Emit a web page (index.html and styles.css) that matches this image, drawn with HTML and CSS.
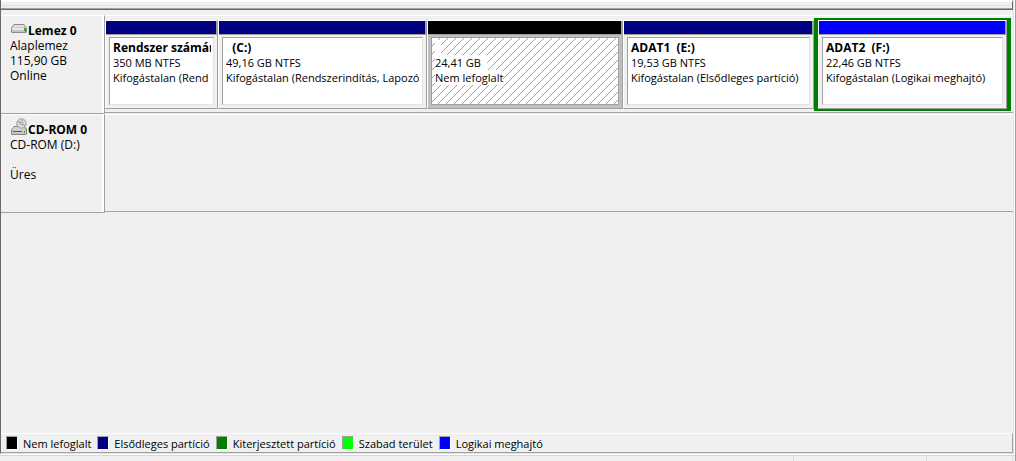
FILE: index.html
```html
<!DOCTYPE html>
<html lang="hu">
<head>
<meta charset="utf-8">
<title>Lemezkezelés</title>
<link rel="stylesheet" href="styles.css">
</head>
<body>
<div class="window">
  <div class="client">
    <div class="upper-pane"></div>
    <main class="disks">
      <section class="disk">
        <header class="disk-label">
          <h2 class="disk-name">
            <svg class="icon" viewBox="0 0 18 18" aria-hidden="true">
              <path d="M4 6h10l3 4v4l-1 1h-14l-1-1v-4z" fill="#8c8c8c"/>
              <path d="M4 7h10l2 3h-14z" fill="#cfcfcf"/>
              <path d="M5 7h8l1 2h-10z" fill="#e2e2e2"/>
              <path d="M2 10h14v4h-14z" fill="#c4c4c4"/>
              <path d="M2 10h12v2h-12z" fill="#e9e9e9"/>
              <path d="M14 10h1v3h-1z" fill="#2fae2f"/>
              <path d="M15 10h1v4h-1z" fill="#777"/>
            </svg><span>Lemez 0</span>
          </h2>
          <p>Alaplemez</p>
          <p>115,90 GB</p>
          <p>Online</p>
        </header>
        <div class="disk-map parts">
          <article class="part">
            <div class="bar primary"></div>
            <div class="body"><div class="info"><div class="lines">
              <h3>Rendszer számára</h3>
              <p>350 MB NTFS</p>
              <p>Kifogástalan (Rend</p>
            </div></div></div>
          </article>
          <article class="part">
            <div class="bar primary"></div>
            <div class="body"><div class="info"><div class="lines">
              <h3>&nbsp; (C:)</h3>
              <p>49,16 GB NTFS</p>
              <p>Kifogástalan (Rendszerindítás, Lapozó</p>
            </div></div></div>
          </article>
          <article class="part selected">
            <div class="bar unallocated"></div>
            <div class="body"><div class="info">
              <svg class="hatch" aria-hidden="true">
                <defs><pattern id="hatch" width="8" height="8" patternUnits="userSpaceOnUse">
                  <path d="M0 7h1v1h-1zM1 6h1v1h-1zM2 5h1v1h-1zM3 4h1v1h-1zM4 3h1v1h-1zM5 2h1v1h-1zM6 1h1v1h-1zM7 0h1v1h-1z" fill="#a0a0a0"/>
                </pattern></defs>
                <rect width="100%" height="100%" fill="url(#hatch)"/>
              </svg>
              <div class="lines">
                <h3><span>&nbsp;&nbsp;</span></h3>
                <p><span>24,41 GB&nbsp;&nbsp;</span></p>
                <p><span>Nem lefoglalt</span></p>
              </div>
            </div></div>
          </article>
          <article class="part">
            <div class="bar primary"></div>
            <div class="body"><div class="info"><div class="lines">
              <h3>ADAT1&nbsp; (E:)</h3>
              <p>19,53 GB NTFS</p>
              <p>Kifogástalan (Elsődleges partíció)</p>
            </div></div></div>
          </article>
          <div class="extended">
            <article class="part">
              <div class="bar logical"></div>
              <div class="body"><div class="info"><div class="lines">
                <h3>ADAT2&nbsp; (F:)</h3>
                <p>22,46 GB NTFS</p>
                <p>Kifogástalan (Logikai meghajtó)</p>
              </div></div></div>
            </article>
          </div>
        </div>
      </section>
      <section class="disk">
        <header class="disk-label">
          <h2 class="disk-name">
            <svg class="icon" viewBox="0 0 18 18" aria-hidden="true">
              <path d="M4 9h10l3 3v5l-1 1h-14l-1-1v-4z" fill="#858585"/>
              <path d="M4 10h10l2 3h-14z" fill="#d4d4d4"/>
              <path d="M2 13h14v4h-14z" fill="#c8c8c8"/>
              <path d="M3 14h9v1h-9z" fill="#5c5c5c"/>
              <path d="M14 14h1v2h-1z" fill="#2fae2f"/>
              <circle cx="11.500" cy="6.500" r="4.700" fill="#dcdcdc" stroke="#9a9a9a"/>
              <path d="M11.500 6.500l-4 -1 1-2z" fill="#6fd06f"/>
              <path d="M11.500 6.500l0-4 2 1z" fill="#d0a8dc"/>
              <path d="M11.500 6.500l4 1-1 2z" fill="#8fd08f"/>
              <circle cx="11.500" cy="6.500" r="1.200" fill="#fff" stroke="#8a8a8a"/>
            </svg><span>CD-ROM 0</span>
          </h2>
          <p>CD-ROM (D:)</p>
          <p>&nbsp;</p>
          <p>Üres</p>
        </header>
        <div class="disk-map"></div>
      </section>
    </main>
    <ul class="legend">
      <li><i class="swatch unallocated"></i>Nem lefoglalt</li>
      <li><i class="swatch primary"></i>Elsődleges partíció</li>
      <li><i class="swatch ext"></i>Kiterjesztett partíció</li>
      <li><i class="swatch free"></i>Szabad terület</li>
      <li><i class="swatch logical"></i>Logikai meghajtó</li>
    </ul>
  </div>
  <footer class="status"><span class="cell wide"></span><span class="cell mid"></span><span class="cell last"></span></footer>
</div>
</body>
</html>
```
FILE: styles.css
```css
* { box-sizing: border-box; }
body, h2, h3, p, ul { margin: 0; padding: 0; }
body {
  background: #f0f0f0;
  color: #000;
  font: 12px/15px "Open Sans", "Noto Sans", sans-serif;
}
h2, h3 { font-size: inherit; font-weight: 700; }
.window {
  display: flex;
  flex-direction: column;
  min-height: 100vh;
  border-right: 1px solid #a0a0a0;
}
.client {
  flex: 1;
  display: flex;
  flex-direction: column;
  border-left: 1px solid #696969;
  border-right: 1px solid #fff;
  border-bottom: 1px solid #e3e3e3;
  box-shadow: inset -1px 0 #e3e3e3;
  padding-right: 1px;
}
.upper-pane {
  height: 10px;
  border-top: 2px solid #fff;
  border-bottom: 1px solid #696969;
  border-right: 1px solid #696969;
  background: linear-gradient(#f0f0f0 3px, #e3e3e3 3px 4px, #f0f0f0 4px 6px, #a0a0a0 6px);
}
.disks { flex: 1; padding-top: 5px; }
.disk { display: flex; height: 99px; }
.disk-label {
  width: 104px;
  padding: 7px 0 0 9px;
  border-top: 1px solid #fff;
  border-bottom: 1px solid #a0a0a0;
  border-right: 1px solid #a0a0a0;
  box-shadow: inset -2px 0 #fff;
  white-space: nowrap;
}
.disk-name { display: flex; height: 15px; }
.icon { width: 18px; height: 18px; margin-top: -5px; flex: none; }
.disk-map {
  flex: 1;
  min-width: 0;
  margin-bottom: 1px;
  padding: 2px 2px 1px 0;
  border-top: 1px solid #fff;
  border-bottom: 1px solid #a0a0a0;
}
.parts {
  display: grid;
  grid-template-columns: 113fr 209fr 196fr 191fr 197fr;
}
.part {
  min-width: 0;
  display: flex;
  flex-direction: column;
  margin: 2px 0;
  border: 1px solid #a0a0a0;
  border-top-color: #fff;
  border-left-color: #fff;
}
.extended {
  min-width: 0;
  display: flex;
  border: 4px solid #008000;
  border-width: 2px 4px;
}
.extended .part { flex: 1; margin: 0; }
.bar {
  height: 14px;
  border-right: 1px solid #a0a0a0;
  border-bottom: 1px solid #a0a0a0;
}
.body { flex: 1; display: flex; padding: 2px 3px 3px; }
.info {
  position: relative;
  flex: 1;
  min-width: 0;
  padding: 2px 2px 2px 3px;
  background: #fff;
  border: 1px solid #e3e3e3;
  border-top-color: #a0a0a0;
  border-left-color: #a0a0a0;
}
.lines { position: relative; overflow: hidden; white-space: nowrap; }
.lines p { font-size: 11px; }
.selected .body { background: #c0c0c0; }
.selected .info { border-color: #a0a0a0; }
.selected .lines span { display: inline-block; background: #fff; }
.hatch { position: absolute; inset: 0; width: 100%; height: 100%; }
.unallocated { background: #000; }
.primary { background: #000080; }
.logical { background: #0000ff; }
.ext { background: #008000; }
.free { background: #00ff00; }
.legend {
  display: flex;
  gap: 6px;
  height: 20px;
  padding-left: 5px;
  align-items: center;
  list-style: none;
  font-size: 11px;
  white-space: nowrap;
  border-top: 1px solid #fff;
  border-right: 1px solid #a0a0a0;
  border-bottom: 1px solid #a0a0a0;
}
.legend li { display: flex; align-items: center; gap: 5px; }
.swatch {
  width: 12px;
  height: 14px;
  border: 1px solid #a0a0a0;
  border-right-color: #fff;
  border-bottom-color: #fff;
}
.status { display: flex; height: 7px; padding-top: 2px; border-top: 1px solid #fff; background: linear-gradient(#d7d7d7 1px, #f0f0f0 1px); }
.cell { border-right: 1px solid #d7d7d7; }
.wide { flex: 795 1 0; }
.mid { flex: 133 1 0; }
.last { flex: 85 1 0; margin-right: 2px; }
```
